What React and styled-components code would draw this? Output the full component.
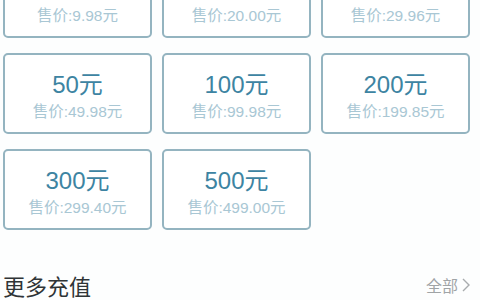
import React from "react";
import styled, { createGlobalStyle } from "styled-components";

const Global = createGlobalStyle`
  html, body { margin: 0; padding: 0; background: #fdfefe; }
  body { font-family: "Liberation Sans", "Noto Sans CJK SC", sans-serif; overflow: hidden; }
  * { box-sizing: border-box; }
`;

const Page = styled.div`
  width: 480px;
  height: 300px;
  overflow: hidden;
`;

const Grid = styled.div`
  display: grid;
  grid-template-columns: repeat(3, 149px);
  grid-auto-rows: 81px;
  column-gap: 10px;
  row-gap: 15px;
  padding: 0 0 0 3px;
  margin-top: -43px;
`;

const Card = styled.div`
  border: 2px solid #94b4c0;
  border-radius: 5px;
  background: #ffffff;
  display: flex;
  flex-direction: column;
  align-items: center;
  padding-top: 16px;
`;

const Face = styled.div`
  font-size: 24px;
  line-height: 28px;
  color: #3d84a2;
`;

const Price = styled.div`
  margin-top: 3px;
  font-size: 15.5px;
  line-height: 20px;
  color: #a9c7d4;
`;

const Header = styled.div`
  display: flex;
  align-items: center;
  justify-content: space-between;
  margin-top: 40px;
  padding: 0 10px 0 3px;
  height: 30px;
`;

const Title = styled.div`
  font-size: 22px;
  color: #2f3436;
`;

const More = styled.div`
  display: flex;
  align-items: center;
  gap: 4px;
  font-size: 16px;
  color: #a0a4a6;
`;

const items = [
  ["10元", "9.98"],
  ["20元", "20.00"],
  ["30元", "29.96"],
  ["50元", "49.98"],
  ["100元", "99.98"],
  ["200元", "199.85"],
  ["300元", "299.40"],
  ["500元", "499.00"],
];

export default function App() {
  return (
    <Page>
      <Global />
      <Grid>
        {items.map(([face, price]) => (
          <Card key={face}>
            <Face>{face}</Face>
            <Price>售价:{price}元</Price>
          </Card>
        ))}
      </Grid>
      <Header>
        <Title>更多充值</Title>
        <More>
          全部
          <svg width="8" height="14" viewBox="0 0 8 14">
            <path d="M1 1 L7 7 L1 13" fill="none" stroke="#a8acae" strokeWidth="1.4" />
          </svg>
        </More>
      </Header>
    </Page>
  );
}
